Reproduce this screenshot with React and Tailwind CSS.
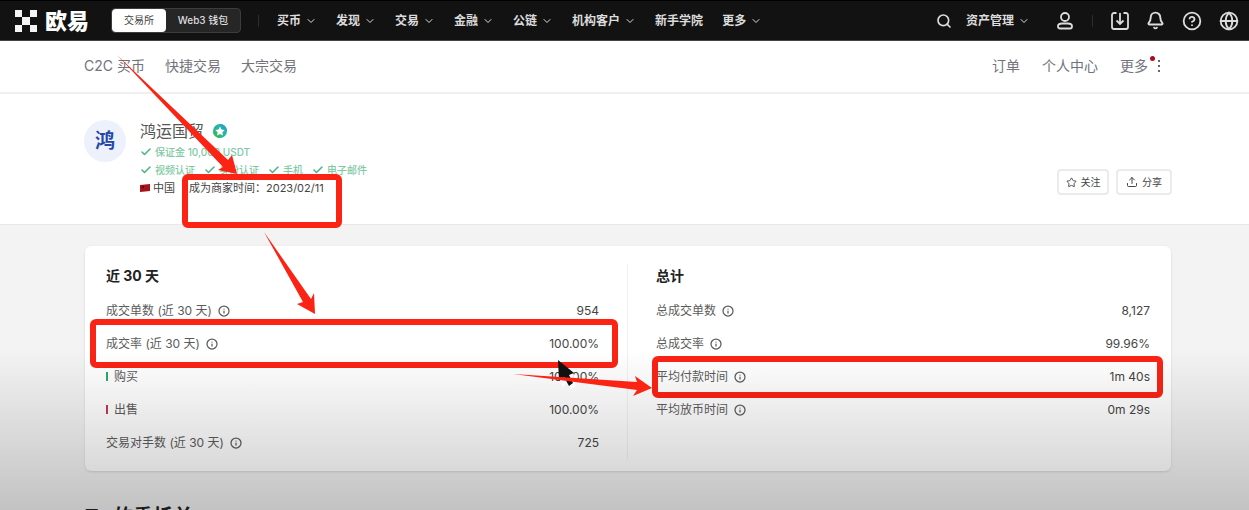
import React from 'react';
import { ChevronDown, Search, Bell, Globe, Info, Star, Check, CircleHelp, Upload } from 'lucide-react';

const menu = [
  { label: '买币', arrow: true },
  { label: '发现', arrow: true },
  { label: '交易', arrow: true },
  { label: '金融', arrow: true },
  { label: '公链', arrow: true },
  { label: '机构客户', arrow: true },
  { label: '新手学院', arrow: false },
  { label: '更多', arrow: true },
];

const monthStats = [
  { label: '成交单数 (近 30 天)', value: '954', info: true },
  { label: '成交率 (近 30 天)', value: '100.00%', info: true, box: 'left' },
  { label: '购买', value: '100.00%', bar: 'bg-[#2fa866]' },
  { label: '出售', value: '100.00%', bar: 'bg-[#c03a52]' },
  { label: '交易对手数 (近 30 天)', value: '725', info: true },
];

const totalStats = [
  { label: '总成交单数', value: '8,127', info: true },
  { label: '总成交率', value: '99.96%', info: true },
  { label: '平均付款时间', value: '1m 40s', info: true, box: 'right' },
  { label: '平均放币时间', value: '0m 29s', info: true },
];

function Logo() {
  return (
    <a href="#" aria-label="欧易" className="flex items-center gap-2 text-white">
      <svg width="22" height="22" viewBox="0 0 22 22" fill="#f4f4f4">
        <rect x="0" y="0" width="7" height="7" />
        <rect x="15" y="0" width="7" height="7" />
        <rect x="7" y="7" width="8" height="8" />
        <rect x="0" y="15" width="7" height="7" />
        <rect x="15" y="15" width="7" height="7" />
      </svg>
      <span className="text-[22px] leading-none font-black">欧易</span>
    </a>
  );
}

function UserIcon() {
  return (
    <svg width="18" height="20" viewBox="0 0 18 20" fill="none" stroke="currentColor" strokeWidth="1.8">
      <circle cx="9" cy="6" r="4" />
      <path d="M6 12.500h6c2 0 4 1 4 2.700s-1 2.300-2 2.300H4c-1 0-2-.6-2-2.300s2-2.700 4-2.700z" />
    </svg>
  );
}

function DownloadIcon() {
  return (
    <svg width="18" height="18" viewBox="0 0 18 18" fill="none" stroke="currentColor" strokeWidth="1.8">
      <path d="M5.500 1H3a2 2 0 0 0-2 2v12a2 2 0 0 0 2 2h12a2 2 0 0 0 2-2V3a2 2 0 0 0-2-2h-2.500" />
      <path d="M9 1v11M5.500 8.500L9 12l3.500-3.500" />
    </svg>
  );
}

function Header() {
  return (
    <header className="flex h-[41px] items-center border-t border-b border-t-black border-b-[#444] bg-[#121212] pr-[10px] pl-[15px] text-[#dcdcdc]">
      <Logo />
      <div className="ml-[22px] flex h-[25px] rounded border border-[#3c3c3c] bg-[#262626] text-[10px]">
        <button type="button" className="w-[54px] rounded bg-white text-[#444]">交易所</button>
        <button type="button" className="w-[74px] font-medium">Web3 钱包</button>
      </div>
      <span className="ml-[17px] h-3 w-px bg-[#2c2c2c]" />
      <nav className="ml-[18px] flex items-center gap-[19px] text-xs font-bold">
        {menu.map((item) => (
          <a key={item.label} href="#" className="flex items-center gap-1 whitespace-nowrap">
            {item.label}
            {item.arrow && <ChevronDown size={12} strokeWidth={2} />}
          </a>
        ))}
      </nav>
      <div className="ml-auto flex items-center">
        <button type="button" aria-label="搜索"><Search size={16} strokeWidth={2.500} /></button>
        <a href="#" className="ml-[14px] flex items-center gap-1 text-xs font-bold">
          资产管理
          <ChevronDown size={12} strokeWidth={2} />
        </a>
        <button type="button" aria-label="用户" className="ml-[26px]"><UserIcon /></button>
        <span className="mx-[18px] h-3 w-px bg-[#2c2c2c]" />
        <div className="flex items-center gap-[17px]">
          <button type="button" aria-label="下载"><DownloadIcon /></button>
          <button type="button" aria-label="通知"><Bell size={19} strokeWidth={2.400} /></button>
          <button type="button" aria-label="帮助"><CircleHelp size={20} strokeWidth={2.200} /></button>
          <button type="button" aria-label="语言"><Globe size={20} strokeWidth={2.200} /></button>
        </div>
      </div>
    </header>
  );
}

function SubNav() {
  return (
    <nav className="flex h-[53px] items-center border-b-2 border-[#f0f0f0] bg-white pr-[88px] pb-[2px] pl-[84px] text-sm text-[#73737b]">
      <div className="flex gap-5">
        <a href="#">C2C 买币</a>
        <a href="#">快捷交易</a>
        <a href="#">大宗交易</a>
      </div>
      <div className="ml-auto flex gap-[22px]">
        <a href="#">订单</a>
        <a href="#">个人中心</a>
        <a href="#" className="relative flex items-center gap-[10px]">
          更多
          <span className="absolute top-0 right-[6px] size-[5px] rounded-full bg-[#a80f1c]" />
          <svg width="3" height="14" viewBox="0 0 3 14" fill="#666">
            <rect y="1" width="2" height="2" />
            <rect y="6" width="2" height="2" />
            <rect y="11" width="2" height="2" />
          </svg>
        </a>
      </div>
    </nav>
  );
}

function Verified({ children }) {
  return (
    <span className="flex items-center gap-[3px]">
      <Check size={12} strokeWidth={3} className="text-[#45b487]" />
      {children}
    </span>
  );
}

function Profile() {
  return (
    <section className="flex h-[131px] border-b border-[#e8e8e8] bg-white pr-[77px] pl-[84px]">
      <div className="mt-[26px] flex size-[42px] items-center justify-center rounded-full bg-[#edf1fc] text-xl font-bold text-[#2348a5]">
        鸿
      </div>
      <div className="mt-6 ml-[14px] text-[10px] leading-[18px] font-medium text-[#7fc9a5]">
        <div className="flex h-[25px] items-center gap-2 text-base font-normal text-[#555]">
          鸿运国贸
          <svg width="16" height="16" viewBox="0 0 16 16">
            <circle cx="8" cy="8" r="7" fill="#25b89a" />
            <path d="M8 1a7 7 0 0 1 7 7h-7z" fill="#27a6c4" />
            <path d="M1 8a7 7 0 0 0 7 7v-7z" fill="#35b95f" />
            <path d="M8 3.500l1.500 2.900 3.200.5-2.300 2.300.5 3.200L8 11l-2.900 1.400.5-3.200-2.300-2.300 3.200-.5z" fill="#fff" />
          </svg>
        </div>
        <div className="flex"><Verified>保证金 10,000 USDT</Verified></div>
        <div className="flex gap-[9px]">
          <Verified>视频认证</Verified>
          <Verified>身份认证</Verified>
          <Verified>手机</Verified>
          <Verified>电子邮件</Verified>
        </div>
        <div className="flex items-center text-[11px] font-normal text-[#444]">
          <svg width="11" height="8" viewBox="0 0 11 8">
            <path d="M0 1l10-1v7l-10 1z" fill="#a5131d" />
            <rect x="2" y="2" width="2" height="2" fill="#5c0d10" />
          </svg>
          <span className="ml-[2px]">中国</span>
          <span className="relative ml-[14px]">
            成为商家时间：2023/02/11
            <span className="absolute -top-[5px] -left-[7px] h-[54px] w-40 rounded-md border-6 border-[#fb2314]" />
          </span>
        </div>
      </div>
      <div className="mt-[75px] ml-auto flex items-start gap-[7px] text-[10px] text-[#444]">
        <button type="button" className="flex h-[26px] w-[52px] items-center justify-center gap-1 rounded border-2 border-[#ebebeb]">
          <Star size={11} />
          关注
        </button>
        <button type="button" className="flex h-[26px] w-[56px] items-center justify-center gap-1 rounded border-2 border-[#ebebeb]">
          <Upload size={12} />
          分享
        </button>
      </div>
    </section>
  );
}

function StatRow({ label, value, info, bar, box }) {
  return (
    <div className="relative flex h-[33px] items-center justify-between">
      <dt className="flex items-center gap-[6px] text-[#5c5c5c]">
        {bar && <span className={`h-[9px] w-[2px] ${bar}`} />}
        {label}
        {info && <Info size={12} strokeWidth={2.500} />}
      </dt>
      <dd className="text-[#444]">{value}</dd>
      {box === 'left' && <span className="absolute -top-2 -right-[19px] -left-4 h-[49px] rounded-md border-6 border-[#fb2314]" />}
      {box === 'right' && <span className="absolute -top-1 -right-[13px] -left-1 h-[42px] rounded-md border-6 border-[#fb2314]" />}
    </div>
  );
}

function StatList({ title, rows }) {
  return (
    <div>
      <h2 className="mb-[6px] text-sm leading-6 font-bold text-[#222]">{title}</h2>
      <dl>
        {rows.map((row) => (
          <StatRow key={row.label} {...row} />
        ))}
      </dl>
    </div>
  );
}

function Arrows() {
  return (
    <svg width="1249" height="510" viewBox="0 0 1249 510" className="pointer-events-none absolute top-0 left-0">
      <path d="M561 366l1 21 5-4 4 6 5-3-3-7 5-2z" fill="#fff" fillOpacity="0.8" />
      <path d="M558 360l1 21 5-4 5 9 4-3-4-8 5-2z" fill="#111" />
      <g fill="#fb2314">
        <path d="M117 55L228 160L232 155L237 174L218 170L223 167Z" />
        <path d="M264 232L311 299L314 293L315 314L297 304L303 302Z" />
        <path d="M513 374L637 382L635 376L652 388L633 396L637 390Z" />
      </g>
    </svg>
  );
}

export default function App() {
  return (
    <div className="relative h-screen overflow-hidden bg-[#f3f3f3] font-['Inter','Noto_Sans_CJK_SC',sans-serif]">
      <Header />
      <SubNav />
      <Profile />
      <main className="pt-[21px] pr-[78px] pl-[85px]">
        <section className="grid grid-cols-2 rounded-md bg-white px-[21px] pt-[18px] pb-3 text-xs shadow-sm">
          <div className="border-r border-[#f1f1f1] pr-7">
            <StatList title="近 30 天" rows={monthStats} />
          </div>
          <div className="pl-7">
            <StatList title="总计" rows={totalStats} />
          </div>
        </section>
        <h2 className="mt-8 text-xl font-bold text-[#222]">Ta 的委托单</h2>
      </main>
      <div className="pointer-events-none absolute inset-x-0 bottom-0 h-40 bg-linear-to-b from-black/0 to-black/20" />
      <Arrows />
    </div>
  );
}
